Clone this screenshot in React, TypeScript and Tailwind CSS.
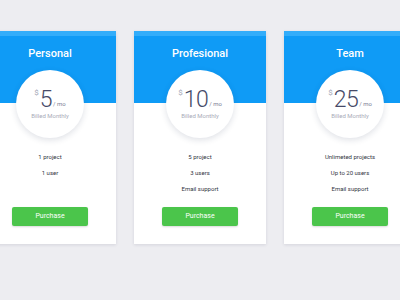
import type { FC } from 'react';

interface Plan {
    name: string;
    price: string;
    features: string[];
}

const PLANS: Plan[] = [
    { name: 'Personal', price: '5', features: ['1 project', '1 user'] },
    { name: 'Profesional', price: '10', features: ['5 project', '3 users', 'Email support'] },
    { name: 'Team', price: '25', features: ['Unlimeted projects', 'Up to 20 users', 'Email support'] },
];

const PlanCard: FC<{ plan: Plan }> = ({ plan }) => (
    <div className="flex h-[213px] w-[132px] shrink-0 flex-col bg-white shadow-[0_1px_3px_rgba(40,40,70,0.12)]">
        <div className="relative h-[72px] bg-[#0f9bf6]">
            <div className="h-[5px] bg-[#33adfa]" />
            <p className="mt-[11px] text-center text-[11px] font-medium leading-[13px] text-white">{plan.name}</p>
            <div className="absolute left-1/2 top-[39px] flex h-[68px] w-[68px] -translate-x-1/2 flex-col items-center justify-center rounded-full bg-white shadow-[0_2px_6px_rgba(30,40,80,0.14)]">
                <div className="flex items-end text-[#464a68]">
                    <span className="mb-[12px] mr-[1px] text-[8px] leading-none text-[#a3a6b6]">$</span>
                    <span className="text-[23px] font-light leading-[19px] tracking-[-0.5px]">{plan.price}</span>
                    <span className="mb-[2px] ml-[1px] text-[6px] leading-none text-[#7d8096]">/ mo</span>
                </div>
                <p className="mt-[4px] text-[6px] leading-none text-[#a9abb8]">Billed Monthly</p>
            </div>
        </div>
        <div className="mt-[50px] flex flex-col items-center gap-[9px]">
            {plan.features.map((f) => (
                <p key={f} className="text-[6px] leading-[7px] text-[#333544]">{f}</p>
            ))}
        </div>
        <div className="mt-auto mb-[18px] flex justify-center">
            <button className="h-[19px] w-[76px] rounded-[2px] bg-[#4bc54b] text-[7px] text-white shadow-[0_1px_2px_rgba(0,0,0,0.15)]">
                Purchase
            </button>
        </div>
    </div>
);

export default function App() {
    return (
        <div className="flex h-[300px] w-[400px] justify-center overflow-hidden bg-[#ededf1] pt-[31px] font-['Roboto',sans-serif]">
            <div className="flex gap-[18px]">
                {PLANS.map((p) => (
                    <PlanCard key={p.name} plan={p} />
                ))}
            </div>
        </div>
    );
}
